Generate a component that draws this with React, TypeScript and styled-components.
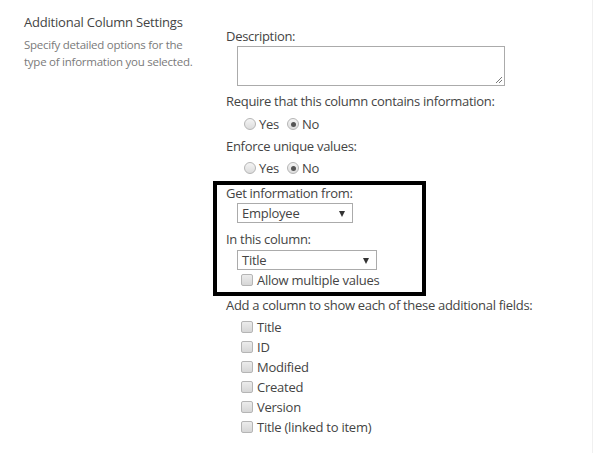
import React from 'react';
import styled, { createGlobalStyle } from 'styled-components';

const GlobalStyle = createGlobalStyle`
  html, body {
    margin: 0;
    padding: 0;
    background: #fff;
  }
  body {
    font-family: "Open Sans", "Liberation Sans", sans-serif;
    color: #444;
  }
`;

const Page = styled.div`
  display: flex;
  width: 593px;
  height: 453px;
  box-sizing: border-box;
  padding: 12px 0 0 24px;
  border-right: 1px solid #f0f0f0;
`;

const SideColumn = styled.div`
  width: 202px;
  flex-shrink: 0;
`;

const SectionTitle = styled.div`
  font-size: 13px;
  line-height: 20px;
  color: #444;
  letter-spacing: -0.2px;
`;

const SectionHint = styled.div`
  margin-top: 4px;
  font-size: 11.5px;
  line-height: 17px;
  color: #7a7a7a;
  letter-spacing: -0.25px;
`;

const FieldColumn = styled.div`
  padding-top: 14px;
  display: flex;
  flex-direction: column;
`;

const Label = styled.div<{ $gap?: number; $lh?: number }>`
  margin-top: ${({ $gap }) => $gap ?? 0}px;
  font-size: 13px;
  line-height: ${({ $lh }) => $lh ?? 20}px;
  color: #444;
  letter-spacing: -0.3px;
  white-space: nowrap;
`;

const TextArea = styled.div`
  position: relative;
  margin-left: 11px;
  width: 268px;
  height: 40px;
  box-sizing: border-box;
  border: 1px solid #ababab;
  background: #fff;
`;

const Grip = styled.svg`
  position: absolute;
  right: 1px;
  bottom: 1px;
`;

const OptionRow = styled.div<{ $gap?: number }>`
  display: flex;
  align-items: center;
  gap: 3px;
  height: 20px;
  margin: ${({ $gap }) => $gap ?? 0}px 0 0 18px;
  font-size: 13px;
  color: #444;
  letter-spacing: -0.25px;
`;

const RadioOption = styled.label`
  display: flex;
  align-items: center;
  gap: 3px;
  margin-right: 5px;
`;

const Radio = styled.span<{ $checked?: boolean }>`
  position: relative;
  width: 12px;
  height: 12px;
  box-sizing: border-box;
  border-radius: 50%;
  border: 1px solid #b5b5b5;
  background: linear-gradient(#f4f4f4, #dcdcdc);

  &::after {
    content: '';
    display: ${({ $checked }) => ($checked ? 'block' : 'none')};
    position: absolute;
    left: 2.5px;
    top: 2.5px;
    width: 5px;
    height: 5px;
    border-radius: 50%;
    background: #555;
  }
`;

const Highlight = styled.div`
  margin: 3px 0 0 -13px;
  width: 213px;
  box-sizing: border-box;
  border: 4px solid #000;
  padding: 0 0 2px 9px;
  display: flex;
  flex-direction: column;
`;

const SelectBox = styled.div<{ $width: number; $gap?: number }>`
  position: relative;
  margin: ${({ $gap }) => $gap ?? 0}px 0 0 11px;
  width: ${({ $width }) => $width}px;
  height: 20px;
  box-sizing: border-box;
  border: 1px solid #ababab;
  background: #fff;
  padding-left: 4px;
  font-size: 13px;
  line-height: 18px;
  color: #444;
  letter-spacing: -0.25px;
`;

const Arrow = styled.span`
  position: absolute;
  right: 7px;
  top: 7px;
  width: 0;
  height: 0;
  border-left: 3.5px solid transparent;
  border-right: 3.5px solid transparent;
  border-top: 6px solid #333;
`;

const CheckRow = styled.label<{ $indent?: number }>`
  display: flex;
  align-items: center;
  gap: 4px;
  height: 20px;
  margin-left: ${({ $indent }) => $indent ?? 15}px;
  font-size: 13px;
  color: #444;
  letter-spacing: -0.25px;
  white-space: nowrap;
`;

const Check = styled.span`
  width: 12px;
  height: 12px;
  box-sizing: border-box;
  border-radius: 2px;
  border: 1px solid #b5b5b5;
  background: linear-gradient(#ececec, #d6d6d6);
`;

const FieldList = styled.div`
  margin-top: 3px;
  display: flex;
  flex-direction: column;
`;

const extraFields = ['Title', 'ID', 'Modified', 'Created', 'Version', 'Title (linked to item)'];

const Select = ({ value, width, gap }: { value: string; width: number; gap?: number }) => (
  <SelectBox $width={width} $gap={gap}>
    {value}
    <Arrow />
  </SelectBox>
);

const YesNo = ({ gap }: { gap?: number }) => (
  <OptionRow $gap={gap}>
    <RadioOption>
      <Radio />
      Yes
    </RadioOption>
    <RadioOption>
      <Radio $checked />
      No
    </RadioOption>
  </OptionRow>
);

export default function App() {
  return (
    <>
      <GlobalStyle />
      <Page>
        <SideColumn>
          <SectionTitle>Additional Column Settings</SectionTitle>
          <SectionHint>
            Specify detailed options for the
            <br />
            type of information you selected.
          </SectionHint>
        </SideColumn>

        <FieldColumn>
          <Label>Description:</Label>
          <TextArea>
            <Grip width="8" height="8" viewBox="0 0 8 8">
              <path d="M7 1 L1 7 M7 4 L4 7" stroke="#777" strokeWidth="1" />
            </Grip>
          </TextArea>

          <Label $gap={5}>Require that this column contains information:</Label>
          <YesNo gap={3} />

          <Label $gap={2}>Enforce unique values:</Label>
          <YesNo gap={2} />

          <Highlight>
            <Label $lh={16}>Get information from:</Label>
            <Select value="Employee" width={116} gap={2} />
            <Label $gap={6}>In this column:</Label>
            <Select value="Title" width={140} gap={1} />
            <CheckRow $indent={15}>
              <Check />
              Allow multiple values
            </CheckRow>
          </Highlight>

          <Label $lh={18}>Add a column to show each of these additional fields:</Label>
          <FieldList>
            {extraFields.map((field) => (
              <CheckRow key={field}>
                <Check />
                {field}
              </CheckRow>
            ))}
          </FieldList>
        </FieldColumn>
      </Page>
    </>
  );
}
